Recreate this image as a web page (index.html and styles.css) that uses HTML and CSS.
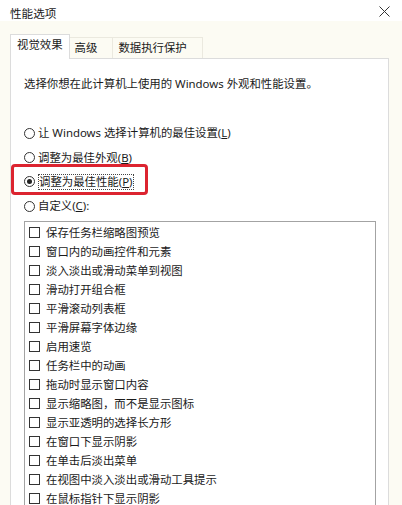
FILE: index.html
```html
<!DOCTYPE html>
<html lang="zh-CN">
  <head>
    <meta charset="UTF-8">
    <meta name="viewport" content="width=device-width, initial-scale=1.0">
    <title>性能选项</title>
    <link rel="stylesheet" href="styles.css">
  </head>
  <body>
    <div class="titlebar">
      <span class="title">性能选项</span>
      <svg class="close" width="11" height="11" viewBox="0 0 11 11">
        <path d="M0.5 0.5 L10.5 10.5 M10.5 0.5 L0.5 10.5" stroke="#333" stroke-width="1" fill="none"/>
      </svg>
    </div>

    <div class="dialog">
      <div class="tabs">
        <div class="tab active">视觉效果</div>
        <div class="tab">高级</div>
        <div class="tab">数据执行保护</div>
      </div>

      <div class="panel">
        <p class="intro">选择你想在此计算机上使用的 Windows 外观和性能设置。</p>

        <div class="radios">
          <div class="radio"><span class="dot"></span>让 Windows 选择计算机的最佳设置(<u>L</u>)</div>
          <div class="radio"><span class="dot"></span>调整为最佳外观(<u>B</u>)</div>
          <div class="radio checked">
            <span class="dot"></span><span class="focus">调整为最佳性能(<u>P</u>)</span>
            <span class="highlight"></span>
          </div>
          <div class="radio"><span class="dot"></span>自定义(<u>C</u>):</div>
        </div>

        <ul class="listbox">
          <li><span class="box"></span>保存任务栏缩略图预览</li>
          <li><span class="box"></span>窗口内的动画控件和元素</li>
          <li><span class="box"></span>淡入淡出或滑动菜单到视图</li>
          <li><span class="box"></span>滑动打开组合框</li>
          <li><span class="box"></span>平滑滚动列表框</li>
          <li><span class="box"></span>平滑屏幕字体边缘</li>
          <li><span class="box"></span>启用速览</li>
          <li><span class="box"></span>任务栏中的动画</li>
          <li><span class="box"></span>拖动时显示窗口内容</li>
          <li><span class="box"></span>显示缩略图，而不是显示图标</li>
          <li><span class="box"></span>显示亚透明的选择长方形</li>
          <li><span class="box"></span>在窗口下显示阴影</li>
          <li><span class="box"></span>在单击后淡出菜单</li>
          <li><span class="box"></span>在视图中淡入淡出或滑动工具提示</li>
          <li><span class="box"></span>在鼠标指针下显示阴影</li>
        </ul>
      </div>
    </div>
  </body>
</html>
```

FILE: styles.css
```css
* {
  box-sizing: border-box;
  margin: 0;
  padding: 0;
}

html, body {
  height: 100%;
  overflow: hidden;
}

body {
  background: #fcfbf3;
  color: #1a1a1a;
  font-family: "Noto Sans", "Noto Sans CJK SC", sans-serif;
  font-size: 11.4px;
  display: flex;
  flex-direction: column;
}

.titlebar {
  height: 28px;
  background: #ffffff;
  display: flex;
  align-items: center;
  justify-content: space-between;
  padding: 5px 12px 0 10px;
}

.title {
  font-size: 11.6px;
}

.close {
  margin-top: -3px;
}

.dialog {
  flex: 1;
  padding: 13px 13px 0 10px;
  display: flex;
  flex-direction: column;
}

.tabs {
  display: flex;
  align-items: flex-end;
  height: 24px;
  position: relative;
  z-index: 1;
}

.tab {
  height: 21px;
  line-height: 20px;
  padding: 0 15px 0 5px;
  border: 1px solid #ebe9df;
  border-bottom: none;
  border-left: none;
}

.tab.active {
  height: 25px;
  line-height: 20px;
  padding: 0 6px;
  background: #ffffff;
  border: 1px solid #dcdcdc;
  border-bottom: none;
  margin-bottom: -1px;
}

.panel {
  flex: 1;
  background: #ffffff;
  border: 1px solid #dcdcdc;
  border-bottom: none;
  padding: 15px 11px 0 13px;
}

.intro {
  line-height: 19px;
}

.radios {
  margin-top: 28px;
}

.radio {
  height: 24.4px;
  line-height: 24px;
  display: flex;
  align-items: center;
  position: relative;
}

.dot {
  width: 11px;
  height: 11px;
  border: 1px solid #333;
  border-radius: 50%;
  margin-right: 3px;
  flex-shrink: 0;
  display: flex;
  align-items: center;
  justify-content: center;
}

.radio.checked .dot::after {
  content: "";
  width: 5px;
  height: 5px;
  border-radius: 50%;
  background: #222;
}

.focus {
  line-height: 14px;
  border: 1px dotted #444;
  padding: 0 1px 0 0;
}

.highlight {
  position: absolute;
  left: -13px;
  top: -6px;
  width: 137px;
  height: 31px;
  border: 3px solid #dc2430;
  border-radius: 4px;
}

.listbox {
  list-style: none;
  margin-top: 2px;
  margin-right: 1px;
  border: 1px solid #a3a3a3;
  border-bottom: none;
  padding: 1px 0 0 4px;
  height: 300px;
  overflow: hidden;
}

.listbox li {
  height: 19px;
  line-height: 19px;
  display: flex;
  align-items: center;
}

.box {
  width: 11px;
  height: 11px;
  border: 1px solid #333;
  margin-right: 6px;
  flex-shrink: 0;
}
```
